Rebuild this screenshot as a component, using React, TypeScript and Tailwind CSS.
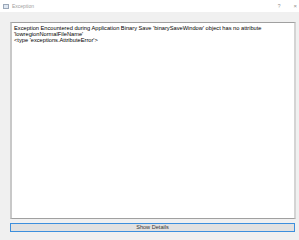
export default function App() {
  return (
    <div
      className="w-[299px] h-[240px] bg-[#f0f0f0] flex flex-col overflow-hidden"
      style={{ fontFamily: '"Liberation Sans", Arial, sans-serif' }}
    >
      <div className="h-[12px] bg-white flex items-center pl-[3px] pr-[2px]">
        <div className="w-[6px] h-[5px] border border-[#9aa7b8] bg-[#dfe7f1]" />
        <span className="ml-[3px] text-[5px] text-[#a0a0a0] leading-none">Exception</span>
        <span className="ml-auto text-[5px] text-[#909090] leading-none">?</span>
        <span className="ml-[13px] text-[6px] text-[#909090] leading-none">×</span>
      </div>
      <div className="flex-1 flex flex-col pl-[10px] pr-[3px] pt-[10px] pb-[8px]">
        <div className="flex-1 bg-white border border-[#a0a0a0] border-l-[2px] border-l-[#c8c8c8] border-r-[2px] border-r-[#d4d4d4] px-[2px] pt-[2px] text-[5.7px] leading-[6px] text-black">
          <div>Exception Encountered during Application Binary Save 'binarySaveWindow' object has no attribute</div>
          <div>'lowregionNormalFileName'</div>
          <div>&lt;type 'exceptions.AttributeError'&gt;</div>
        </div>
        <button className="mt-[4px] mr-[1px] h-[9px] border border-[#3c8fdd] bg-[#e1e1e1] text-[5.6px] leading-none text-[#333] flex items-center justify-center">
          Show Details
        </button>
      </div>
    </div>
  );
}
